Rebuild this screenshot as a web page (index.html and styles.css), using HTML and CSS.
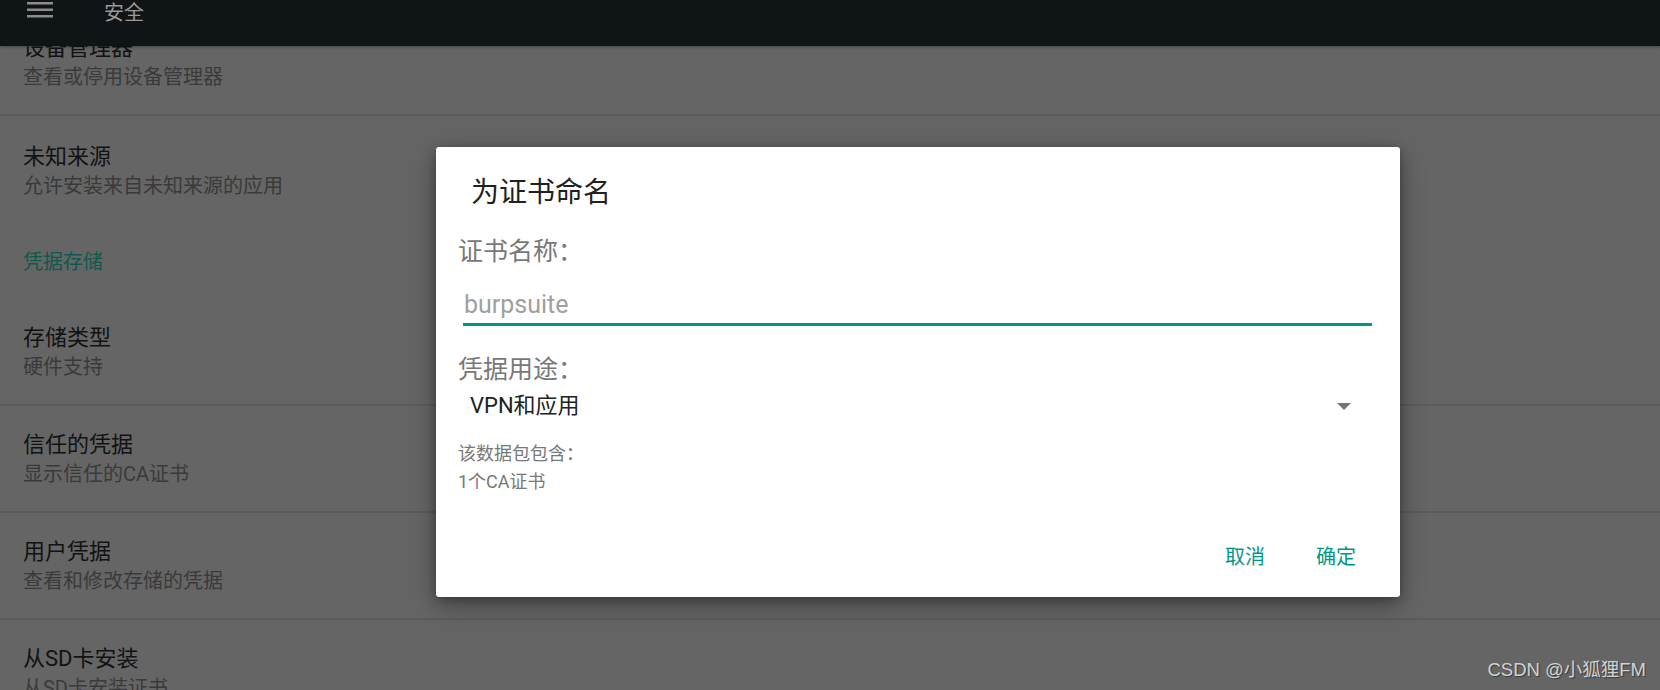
FILE: index.html
```html
<!DOCTYPE html>
<html lang="zh-CN">
<head>
<meta charset="utf-8">
<title>安全</title>
<link rel="stylesheet" href="styles.css">
</head>
<body>
<div class="screen">
  <header class="toolbar">
    <svg class="menu-icon" width="26" height="20" viewBox="0 0 26 20" aria-hidden="true">
      <rect x="0" y="2" width="26" height="2.5"/>
      <rect x="0" y="8.5" width="26" height="2.5"/>
      <rect x="0" y="15" width="26" height="2.5"/>
    </svg>
    <span class="toolbar-title">安全</span>
  </header>
  <main class="list-viewport">
    <div class="list">
      <div class="pref pref-divided">
        <div class="pref-title">设备管理器</div>
        <div class="pref-summary">查看或停用设备管理器</div>
      </div>
      <div class="pref pref-last">
        <div class="pref-title">未知来源</div>
        <div class="pref-summary">允许安装来自未知来源的应用</div>
      </div>
      <div class="category">凭据存储</div>
      <div class="pref pref-divided">
        <div class="pref-title">存储类型</div>
        <div class="pref-summary">硬件支持</div>
      </div>
      <div class="pref pref-divided">
        <div class="pref-title">信任的凭据</div>
        <div class="pref-summary">显示信任的CA证书</div>
      </div>
      <div class="pref pref-divided">
        <div class="pref-title">用户凭据</div>
        <div class="pref-summary">查看和修改存储的凭据</div>
      </div>
      <div class="pref pref-divided">
        <div class="pref-title">从SD卡安装</div>
        <div class="pref-summary">从SD卡安装证书</div>
      </div>
    </div>
  </main>

  <div class="dialog" role="dialog">
    <div class="dialog-title">为证书命名</div>
    <div class="field-label">证书名称：</div>
    <div class="text-input"><span class="hint">burpsuite</span></div>
    <div class="field-label purpose-label">凭据用途：</div>
    <div class="spinner">
      <span class="spinner-value">VPN和应用</span>
      <span class="spinner-arrow"></span>
    </div>
    <div class="info">
      <div>该数据包包含：</div>
      <div>1个CA证书</div>
    </div>
    <div class="dialog-actions">
      <span class="action">取消</span>
      <span class="action">确定</span>
    </div>
  </div>

  <div class="watermark">CSDN @小狐狸FM</div>
</div>
</body>
</html>
```

FILE: styles.css
```css
html, body {
  margin: 0;
  padding: 0;
}

body {
  width: 1660px;
  height: 690px;
  overflow: hidden;
  background: #666666;
  font-family: Roboto, "Noto Sans CJK SC", sans-serif;
}

.screen {
  position: relative;
  width: 1660px;
  height: 690px;
  display: flex;
  flex-direction: column;
  overflow: hidden;
  background: #656565;
}

/* Toolbar (dimmed) */
.toolbar {
  flex: 0 0 46px;
  height: 46px;
  background: #0f1416;
  display: flex;
  align-items: flex-start;
  padding-left: 27px;
  box-sizing: border-box;
  position: relative;
  z-index: 2;
  box-shadow: 0 1px 3px rgba(0, 0, 0, 0.35);
}

.menu-icon {
  display: block;
  fill: #8c8c8c;
}

.toolbar-title {
  margin-left: 51px;
  font-size: 20px;
  line-height: 26px;
  color: #9a9a9a;
}

/* Preference list (dimmed by scrim) */
.list-viewport {
  flex: 1 1 auto;
  overflow: hidden;
}

.list {
  margin-top: -37px;
}

.pref {
  padding: 24px 23px 23px;
  border-bottom: 2px solid #5b5b5b;
}

.pref-last {
  padding: 26px 23px 25px;
  border-bottom: 0;
}

.pref-title {
  font-size: 22px;
  line-height: 30px;
  color: #121212;
}

.pref-summary {
  font-size: 20px;
  line-height: 28px;
  color: #3a3a3a;
}

.category {
  padding: 24px 23px 24px;
  font-size: 20px;
  line-height: 26px;
  color: #10594f;
}

/* Dialog */
.dialog {
  position: absolute;
  left: 436px;
  top: 147px;
  width: 964px;
  box-sizing: border-box;
  background: #ffffff;
  border-radius: 3px;
  padding: 29px 0 26px;
  box-shadow: 0 8px 26px rgba(0, 0, 0, 0.35), 0 2px 8px rgba(0, 0, 0, 0.25);
  z-index: 5;
}

.dialog-title {
  padding-left: 35px;
  font-size: 28px;
  line-height: 34px;
  color: #212121;
}

.field-label {
  margin-top: 27px;
  padding-left: 22px;
  font-size: 25px;
  line-height: 30px;
  color: #787878;
}

.text-input {
  margin: 23px 28px 0 27px;
  padding: 0 0 3px 1px;
  border-bottom: 3px solid #009688;
  font-size: 25px;
  line-height: 30px;
}

.hint {
  color: #a0a0a0;
}

.purpose-label {
  margin-top: 29px;
}

.spinner {
  margin: 7px 49px 0 22px;
  padding-left: 12px;
  display: flex;
  align-items: center;
  justify-content: space-between;
  height: 28px;
}

.spinner-value {
  font-size: 22px;
  line-height: 28px;
  color: #212121;
}

.spinner-arrow {
  width: 0;
  height: 0;
  border-left: 7px solid transparent;
  border-right: 7px solid transparent;
  border-top: 7px solid #757575;
}

.info {
  margin-top: 20px;
  padding-left: 22px;
  font-size: 18px;
  line-height: 28px;
  color: #787878;
}

.dialog-actions {
  margin-top: 47px;
  display: flex;
  justify-content: flex-end;
  gap: 51px;
  padding-right: 44px;
}

.action {
  font-size: 20px;
  line-height: 28px;
  color: #009688;
}

/* Watermark overlay */
.watermark {
  position: absolute;
  right: 14px;
  bottom: 8px;
  font-family: "Liberation Sans", "Noto Sans CJK SC", sans-serif;
  font-size: 18.5px;
  line-height: 24px;
  color: #d2d2d2;
  text-shadow: 1px 1px 1px rgba(0, 0, 0, 0.45);
  z-index: 6;
}
```
